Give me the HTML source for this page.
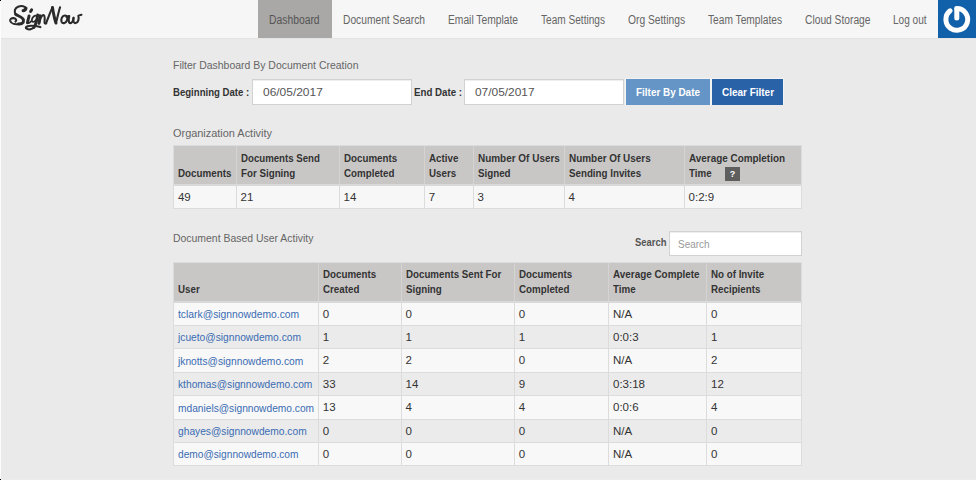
<!DOCTYPE html>
<html><head><meta charset="utf-8">
<style>
html,body{margin:0;padding:0}
body{width:976px;height:480px;overflow:hidden;position:relative;background:#eaeaea;font-family:"Liberation Sans",sans-serif}
.b{position:absolute}
.t{position:absolute;white-space:nowrap;transform-origin:0 0;font-family:"Liberation Sans",sans-serif}
</style></head><body>
<div class="b" style="left:0px;top:0px;width:976px;height:38px;background:#f6f6f6;"></div>
<div class="b" style="left:0px;top:38px;width:976px;height:1px;background:#e3e3e3;"></div>
<div class="b" style="left:258px;top:0px;width:74px;height:38px;background:#a9a8a6;"></div>
<div class="b" style="left:938px;top:0px;width:38px;height:38px;background:#1160aa;"></div>
<div class="b" style="left:0px;top:0px;width:1px;height:480px;background:#fdfdfd;"></div>
<div class="b" style="left:1px;top:479px;width:975px;height:1px;background:#ececec;"></div>
<div class="b" style="left:0px;top:479px;width:1px;height:1px;background:#000;"></div>
<div class="b" style="left:0px;top:0px;width:1px;height:1px;background:#000;"></div>
<div class="b" style="left:252px;top:79px;width:160px;height:26px;background:#fff;border:1px solid #d2d2d2;box-sizing:border-box;box-shadow:inset 0 1px 1px rgba(0,0,0,.075)"></div>
<div class="b" style="left:464px;top:79px;width:160px;height:26px;background:#fff;border:1px solid #d2d2d2;box-sizing:border-box;box-shadow:inset 0 1px 1px rgba(0,0,0,.075)"></div>
<div class="b" style="left:625px;top:78px;width:159px;height:27px;background:#f3f3f3;"></div>
<div class="b" style="left:626px;top:79px;width:84px;height:26px;background:#6595c6;"></div>
<div class="b" style="left:712px;top:79px;width:71px;height:26px;background:#2a62a8;"></div>
<div class="b" style="left:669px;top:231px;width:133px;height:25px;background:#fff;border:1px solid #d2d2d2;box-sizing:border-box;box-shadow:inset 0 1px 1px rgba(0,0,0,.075)"></div>
<div class="b" style="left:173px;top:145px;width:629px;height:64px;background:#dcdcdc;"></div>
<div class="b" style="left:174px;top:146px;width:627px;height:38px;background:#c9c7c6;"></div>
<div class="b" style="left:174px;top:184px;width:627px;height:2px;background:#d9d9d9;"></div>
<div class="b" style="left:174px;top:186px;width:627px;height:22px;background:#f7f7f7;"></div>
<div class="b" style="left:236px;top:146px;width:1px;height:38px;background:#d6d4d3;"></div>
<div class="b" style="left:236px;top:186px;width:1px;height:22px;background:#dcdcdc;"></div>
<div class="b" style="left:339px;top:146px;width:1px;height:38px;background:#d6d4d3;"></div>
<div class="b" style="left:339px;top:186px;width:1px;height:22px;background:#dcdcdc;"></div>
<div class="b" style="left:424px;top:146px;width:1px;height:38px;background:#d6d4d3;"></div>
<div class="b" style="left:424px;top:186px;width:1px;height:22px;background:#dcdcdc;"></div>
<div class="b" style="left:473px;top:146px;width:1px;height:38px;background:#d6d4d3;"></div>
<div class="b" style="left:473px;top:186px;width:1px;height:22px;background:#dcdcdc;"></div>
<div class="b" style="left:564px;top:146px;width:1px;height:38px;background:#d6d4d3;"></div>
<div class="b" style="left:564px;top:186px;width:1px;height:22px;background:#dcdcdc;"></div>
<div class="b" style="left:684px;top:146px;width:1px;height:38px;background:#d6d4d3;"></div>
<div class="b" style="left:684px;top:186px;width:1px;height:22px;background:#dcdcdc;"></div>
<div class="b" style="left:725px;top:167px;width:15px;height:14px;background:#5e5e5e;color:#fff;font-weight:700;font-size:9px;line-height:14px;text-align:center">?</div>
<div class="b" style="left:173px;top:262px;width:629px;height:204px;background:#dcdcdc;"></div>
<div class="b" style="left:174px;top:263px;width:627px;height:38px;background:#c9c7c6;"></div>
<div class="b" style="left:174px;top:301px;width:627px;height:2px;background:#d9d9d9;"></div>
<div class="b" style="left:174px;top:303px;width:627px;height:22px;background:#f8f8f8;"></div>
<div class="b" style="left:174px;top:326px;width:627px;height:22px;background:#ebebeb;"></div>
<div class="b" style="left:174px;top:349px;width:627px;height:23px;background:#f8f8f8;"></div>
<div class="b" style="left:174px;top:373px;width:627px;height:22px;background:#ebebeb;"></div>
<div class="b" style="left:174px;top:396px;width:627px;height:23px;background:#f8f8f8;"></div>
<div class="b" style="left:174px;top:420px;width:627px;height:22px;background:#ebebeb;"></div>
<div class="b" style="left:174px;top:443px;width:627px;height:22px;background:#f8f8f8;"></div>
<div class="b" style="left:318px;top:263px;width:1px;height:38px;background:#d6d4d3;"></div>
<div class="b" style="left:318px;top:303px;width:1px;height:162px;background:#dcdcdc;"></div>
<div class="b" style="left:401px;top:263px;width:1px;height:38px;background:#d6d4d3;"></div>
<div class="b" style="left:401px;top:303px;width:1px;height:162px;background:#dcdcdc;"></div>
<div class="b" style="left:514px;top:263px;width:1px;height:38px;background:#d6d4d3;"></div>
<div class="b" style="left:514px;top:303px;width:1px;height:162px;background:#dcdcdc;"></div>
<div class="b" style="left:608px;top:263px;width:1px;height:38px;background:#d6d4d3;"></div>
<div class="b" style="left:608px;top:303px;width:1px;height:162px;background:#dcdcdc;"></div>
<div class="b" style="left:706px;top:263px;width:1px;height:38px;background:#d6d4d3;"></div>
<div class="b" style="left:706px;top:303px;width:1px;height:162px;background:#dcdcdc;"></div>
<svg class="b" style="left:938px;top:0" width="38" height="38" viewBox="0 0 38 38">
  <path d="M12.1 10.8 A 10.9 10.9 0 1 0 18.8 8.5" fill="none" stroke="#fff" stroke-width="5" stroke-linecap="round"/>
  <line x1="18.8" y1="9" x2="18.8" y2="17.9" stroke="#fff" stroke-width="5" stroke-linecap="round"/>
</svg>
<svg class="b" style="left:5px;top:2px" width="85" height="34" viewBox="0 0 976 390">
 <g fill="none" stroke="#2a2a2a" stroke-linecap="round" stroke-linejoin="round">
  <g stroke-width="24">
   <path d="M207,100 C225,105 250,90 241,70 C232,48 190,38 150,55 C115,70 100,105 122,140"/>
   <path d="M155,253 C120,258 70,250 60,218 C55,195 75,182 100,185 C125,190 140,210 120,224"/>
   <path d="M390,245 C402,200 418,150 440,150 C464,152 454,210 454,232 C454,250 464,250 474,242"/>
   <path d="M470,245 C495,185 520,115 545,62"/>
   <path d="M585,242 C600,185 615,115 632,60"/>
   <path d="M690,155 C655,152 640,200 650,228 C660,250 695,248 710,215 C725,180 710,155 690,155"/>
   <path d="M706,170 C716,168 724,164 730,162"/>
   <path d="M738,160 C728,200 728,242 752,242 C772,242 782,212 787,182"/>
   <path d="M787,182 C782,217 787,247 812,242 C842,237 852,192 842,158 C852,152 864,150 878,146"/>
   <path d="M332,292 C310,318 262,322 242,302 C230,285 262,272 302,272 C342,272 380,280 406,288"/>
  </g>
  <g stroke-width="20">
   <path d="M368,160 C340,150 312,172 308,205 C305,232 332,236 352,210"/>
   <path d="M258,238 C262,250 285,240 300,220"/>
  </g>
  <g stroke-width="34">
   <path d="M122,140 C142,162 207,168 212,207 C216,245 188,255 155,253"/>
   <path d="M241,70 C238,85 225,95 207,100"/>
   <path d="M306,88 L294,108"/>
   <path d="M276,160 C270,190 262,215 258,238"/>
   <path d="M375,150 C368,200 352,262 332,292"/>
   <path d="M402,158 C400,190 394,222 390,245"/>
   <path d="M545,62 C556,130 570,195 585,242"/>
  </g>
 </g>
</svg>

<span class="t" style="left:269.4px;top:13.54px;font-size:12px;line-height:12px;font-weight:400;color:#555;transform:scaleX(0.862)">Dashboard</span>
<span class="t" style="left:343.0px;top:13.54px;font-size:12px;line-height:12px;font-weight:400;color:#656565;transform:scaleX(0.854)">Document Search</span>
<span class="t" style="left:448.0px;top:13.54px;font-size:12px;line-height:12px;font-weight:400;color:#656565;transform:scaleX(0.855)">Email Template</span>
<span class="t" style="left:541.0px;top:13.54px;font-size:12px;line-height:12px;font-weight:400;color:#656565;transform:scaleX(0.842)">Team Settings</span>
<span class="t" style="left:628.0px;top:13.54px;font-size:12px;line-height:12px;font-weight:400;color:#656565;transform:scaleX(0.855)">Org Settings</span>
<span class="t" style="left:708.0px;top:13.54px;font-size:12px;line-height:12px;font-weight:400;color:#656565;transform:scaleX(0.849)">Team Templates</span>
<span class="t" style="left:804.5px;top:13.54px;font-size:12px;line-height:12px;font-weight:400;color:#656565;transform:scaleX(0.854)">Cloud Storage</span>
<span class="t" style="left:893.0px;top:13.54px;font-size:12px;line-height:12px;font-weight:400;color:#656565;transform:scaleX(0.837)">Log out</span>
<span class="t" style="left:173.2px;top:59.89px;font-size:11px;line-height:11px;font-weight:400;color:#666;transform:scaleX(0.951)">Filter Dashboard By Document Creation</span>
<span class="t" style="left:173.2px;top:86.51px;font-size:10.5px;line-height:10.5px;font-weight:700;color:#333;transform:scaleX(0.913)">Beginning Date :</span>
<span class="t" style="left:414.2px;top:86.51px;font-size:10.5px;line-height:10.5px;font-weight:700;color:#333;transform:scaleX(0.924)">End Date :</span>
<span class="t" style="left:262.8px;top:86.67px;font-size:11.5px;line-height:11.5px;font-weight:400;color:#555;transform:scaleX(1.039)">06/05/2017</span>
<span class="t" style="left:475.0px;top:86.67px;font-size:11.5px;line-height:11.5px;font-weight:400;color:#555;transform:scaleX(1.034)">07/05/2017</span>
<span class="t" style="left:636.0px;top:86.96px;font-size:10.8px;line-height:10.8px;font-weight:700;color:#fff;transform:scaleX(0.919)">Filter By Date</span>
<span class="t" style="left:721.5px;top:86.96px;font-size:10.8px;line-height:10.8px;font-weight:700;color:#fff;transform:scaleX(0.922)">Clear Filter</span>
<span class="t" style="left:173.0px;top:128.09px;font-size:11px;line-height:11px;font-weight:400;color:#666;transform:scaleX(0.993)">Organization Activity</span>
<span class="t" style="left:177.9px;top:167.86px;font-size:10.5px;line-height:10.5px;font-weight:700;color:#333;transform:scaleX(0.934)">Documents</span>
<span class="t" style="left:240.6px;top:152.86px;font-size:10.5px;line-height:10.5px;font-weight:700;color:#333;transform:scaleX(0.920)">Documents Send</span>
<span class="t" style="left:240.6px;top:167.86px;font-size:10.5px;line-height:10.5px;font-weight:700;color:#333;transform:scaleX(0.930)">For Signing</span>
<span class="t" style="left:343.5px;top:152.86px;font-size:10.5px;line-height:10.5px;font-weight:700;color:#333;transform:scaleX(0.930)">Documents</span>
<span class="t" style="left:343.5px;top:167.86px;font-size:10.5px;line-height:10.5px;font-weight:700;color:#333;transform:scaleX(0.930)">Completed</span>
<span class="t" style="left:428.8px;top:152.86px;font-size:10.5px;line-height:10.5px;font-weight:700;color:#333;transform:scaleX(0.930)">Active</span>
<span class="t" style="left:428.8px;top:167.86px;font-size:10.5px;line-height:10.5px;font-weight:700;color:#333;transform:scaleX(0.930)">Users</span>
<span class="t" style="left:477.5px;top:152.86px;font-size:10.5px;line-height:10.5px;font-weight:700;color:#333;transform:scaleX(0.948)">Number Of Users</span>
<span class="t" style="left:477.5px;top:167.86px;font-size:10.5px;line-height:10.5px;font-weight:700;color:#333;transform:scaleX(0.930)">Signed</span>
<span class="t" style="left:568.5px;top:152.86px;font-size:10.5px;line-height:10.5px;font-weight:700;color:#333;transform:scaleX(0.946)">Number Of Users</span>
<span class="t" style="left:568.5px;top:167.86px;font-size:10.5px;line-height:10.5px;font-weight:700;color:#333;transform:scaleX(0.930)">Sending Invites</span>
<span class="t" style="left:688.6px;top:152.86px;font-size:10.5px;line-height:10.5px;font-weight:700;color:#333;transform:scaleX(0.944)">Average Completion</span>
<span class="t" style="left:688.6px;top:167.86px;font-size:10.5px;line-height:10.5px;font-weight:700;color:#333;transform:scaleX(0.930)">Time</span>
<span class="t" style="left:177.9px;top:191.87px;font-size:11.5px;line-height:11.5px;font-weight:400;color:#333;transform:scaleX(1.000)">49</span>
<span class="t" style="left:240.6px;top:191.87px;font-size:11.5px;line-height:11.5px;font-weight:400;color:#333;transform:scaleX(1.000)">21</span>
<span class="t" style="left:343.5px;top:191.87px;font-size:11.5px;line-height:11.5px;font-weight:400;color:#333;transform:scaleX(1.000)">14</span>
<span class="t" style="left:428.8px;top:191.87px;font-size:11.5px;line-height:11.5px;font-weight:400;color:#333;transform:scaleX(1.000)">7</span>
<span class="t" style="left:477.5px;top:191.87px;font-size:11.5px;line-height:11.5px;font-weight:400;color:#333;transform:scaleX(1.000)">3</span>
<span class="t" style="left:568.5px;top:191.87px;font-size:11.5px;line-height:11.5px;font-weight:400;color:#333;transform:scaleX(1.000)">4</span>
<span class="t" style="left:688.6px;top:191.87px;font-size:11.5px;line-height:11.5px;font-weight:400;color:#333;transform:scaleX(1.000)">0:2:9</span>
<span class="t" style="left:173.3px;top:232.69px;font-size:11px;line-height:11px;font-weight:400;color:#666;transform:scaleX(0.949)">Document Based User Activity</span>
<span class="t" style="left:634.8px;top:237.11px;font-size:10.5px;line-height:10.5px;font-weight:700;color:#555;transform:scaleX(0.899)">Search</span>
<span class="t" style="left:678.3px;top:239.19px;font-size:11px;line-height:11px;font-weight:400;color:#999;transform:scaleX(0.904)">Search</span>
<span class="t" style="left:177.7px;top:284.01px;font-size:10.5px;line-height:10.5px;font-weight:700;color:#333;transform:scaleX(0.930)">User</span>
<span class="t" style="left:322.8px;top:268.91px;font-size:10.5px;line-height:10.5px;font-weight:700;color:#333;transform:scaleX(0.930)">Documents</span>
<span class="t" style="left:322.8px;top:284.01px;font-size:10.5px;line-height:10.5px;font-weight:700;color:#333;transform:scaleX(0.930)">Created</span>
<span class="t" style="left:405.5px;top:268.91px;font-size:10.5px;line-height:10.5px;font-weight:700;color:#333;transform:scaleX(0.928)">Documents Sent For</span>
<span class="t" style="left:405.5px;top:284.01px;font-size:10.5px;line-height:10.5px;font-weight:700;color:#333;transform:scaleX(0.930)">Signing</span>
<span class="t" style="left:518.8px;top:268.91px;font-size:10.5px;line-height:10.5px;font-weight:700;color:#333;transform:scaleX(0.930)">Documents</span>
<span class="t" style="left:518.8px;top:284.01px;font-size:10.5px;line-height:10.5px;font-weight:700;color:#333;transform:scaleX(0.930)">Completed</span>
<span class="t" style="left:613.0px;top:268.91px;font-size:10.5px;line-height:10.5px;font-weight:700;color:#333;transform:scaleX(0.943)">Average Complete</span>
<span class="t" style="left:613.0px;top:284.01px;font-size:10.5px;line-height:10.5px;font-weight:700;color:#333;transform:scaleX(0.930)">Time</span>
<span class="t" style="left:711.1px;top:268.91px;font-size:10.5px;line-height:10.5px;font-weight:700;color:#333;transform:scaleX(0.930)">No of Invite</span>
<span class="t" style="left:711.1px;top:284.01px;font-size:10.5px;line-height:10.5px;font-weight:700;color:#333;transform:scaleX(0.930)">Recipients</span>
<span class="t" style="left:177.7px;top:308.99px;font-size:11px;line-height:11px;font-weight:400;color:#3a6cb3;transform:scaleX(0.938)">tclark@signnowdemo.com</span>
<span class="t" style="left:322.8px;top:308.57px;font-size:11.5px;line-height:11.5px;font-weight:400;color:#333;transform:scaleX(1.000)">0</span>
<span class="t" style="left:405.5px;top:308.57px;font-size:11.5px;line-height:11.5px;font-weight:400;color:#333;transform:scaleX(1.000)">0</span>
<span class="t" style="left:518.8px;top:308.57px;font-size:11.5px;line-height:11.5px;font-weight:400;color:#333;transform:scaleX(1.000)">0</span>
<span class="t" style="left:613.0px;top:308.57px;font-size:11.5px;line-height:11.5px;font-weight:400;color:#333;transform:scaleX(1.000)">N/A</span>
<span class="t" style="left:711.1px;top:308.57px;font-size:11.5px;line-height:11.5px;font-weight:400;color:#333;transform:scaleX(1.000)">0</span>
<span class="t" style="left:177.7px;top:332.39px;font-size:11px;line-height:11px;font-weight:400;color:#3a6cb3;transform:scaleX(0.930)">jcueto@signnowdemo.com</span>
<span class="t" style="left:322.8px;top:331.97px;font-size:11.5px;line-height:11.5px;font-weight:400;color:#333;transform:scaleX(1.000)">1</span>
<span class="t" style="left:405.5px;top:331.97px;font-size:11.5px;line-height:11.5px;font-weight:400;color:#333;transform:scaleX(1.000)">1</span>
<span class="t" style="left:518.8px;top:331.97px;font-size:11.5px;line-height:11.5px;font-weight:400;color:#333;transform:scaleX(1.000)">1</span>
<span class="t" style="left:613.0px;top:331.97px;font-size:11.5px;line-height:11.5px;font-weight:400;color:#333;transform:scaleX(1.000)">0:0:3</span>
<span class="t" style="left:711.1px;top:331.97px;font-size:11.5px;line-height:11.5px;font-weight:400;color:#333;transform:scaleX(1.000)">1</span>
<span class="t" style="left:177.7px;top:355.79px;font-size:11px;line-height:11px;font-weight:400;color:#3a6cb3;transform:scaleX(0.930)">jknotts@signnowdemo.com</span>
<span class="t" style="left:322.8px;top:355.37px;font-size:11.5px;line-height:11.5px;font-weight:400;color:#333;transform:scaleX(1.000)">2</span>
<span class="t" style="left:405.5px;top:355.37px;font-size:11.5px;line-height:11.5px;font-weight:400;color:#333;transform:scaleX(1.000)">2</span>
<span class="t" style="left:518.8px;top:355.37px;font-size:11.5px;line-height:11.5px;font-weight:400;color:#333;transform:scaleX(1.000)">0</span>
<span class="t" style="left:613.0px;top:355.37px;font-size:11.5px;line-height:11.5px;font-weight:400;color:#333;transform:scaleX(1.000)">N/A</span>
<span class="t" style="left:711.1px;top:355.37px;font-size:11.5px;line-height:11.5px;font-weight:400;color:#333;transform:scaleX(1.000)">2</span>
<span class="t" style="left:177.7px;top:379.19px;font-size:11px;line-height:11px;font-weight:400;color:#3a6cb3;transform:scaleX(0.930)">kthomas@signnowdemo.com</span>
<span class="t" style="left:322.8px;top:378.77px;font-size:11.5px;line-height:11.5px;font-weight:400;color:#333;transform:scaleX(1.000)">33</span>
<span class="t" style="left:405.5px;top:378.77px;font-size:11.5px;line-height:11.5px;font-weight:400;color:#333;transform:scaleX(1.000)">14</span>
<span class="t" style="left:518.8px;top:378.77px;font-size:11.5px;line-height:11.5px;font-weight:400;color:#333;transform:scaleX(1.000)">9</span>
<span class="t" style="left:613.0px;top:378.77px;font-size:11.5px;line-height:11.5px;font-weight:400;color:#333;transform:scaleX(1.000)">0:3:18</span>
<span class="t" style="left:711.1px;top:378.77px;font-size:11.5px;line-height:11.5px;font-weight:400;color:#333;transform:scaleX(1.000)">12</span>
<span class="t" style="left:177.7px;top:402.59px;font-size:11px;line-height:11px;font-weight:400;color:#3a6cb3;transform:scaleX(0.926)">mdaniels@signnowdemo.com</span>
<span class="t" style="left:322.8px;top:402.17px;font-size:11.5px;line-height:11.5px;font-weight:400;color:#333;transform:scaleX(1.000)">13</span>
<span class="t" style="left:405.5px;top:402.17px;font-size:11.5px;line-height:11.5px;font-weight:400;color:#333;transform:scaleX(1.000)">4</span>
<span class="t" style="left:518.8px;top:402.17px;font-size:11.5px;line-height:11.5px;font-weight:400;color:#333;transform:scaleX(1.000)">4</span>
<span class="t" style="left:613.0px;top:402.17px;font-size:11.5px;line-height:11.5px;font-weight:400;color:#333;transform:scaleX(1.000)">0:0:6</span>
<span class="t" style="left:711.1px;top:402.17px;font-size:11.5px;line-height:11.5px;font-weight:400;color:#333;transform:scaleX(1.000)">4</span>
<span class="t" style="left:177.7px;top:425.99px;font-size:11px;line-height:11px;font-weight:400;color:#3a6cb3;transform:scaleX(0.930)">ghayes@signnowdemo.com</span>
<span class="t" style="left:322.8px;top:425.57px;font-size:11.5px;line-height:11.5px;font-weight:400;color:#333;transform:scaleX(1.000)">0</span>
<span class="t" style="left:405.5px;top:425.57px;font-size:11.5px;line-height:11.5px;font-weight:400;color:#333;transform:scaleX(1.000)">0</span>
<span class="t" style="left:518.8px;top:425.57px;font-size:11.5px;line-height:11.5px;font-weight:400;color:#333;transform:scaleX(1.000)">0</span>
<span class="t" style="left:613.0px;top:425.57px;font-size:11.5px;line-height:11.5px;font-weight:400;color:#333;transform:scaleX(1.000)">N/A</span>
<span class="t" style="left:711.1px;top:425.57px;font-size:11.5px;line-height:11.5px;font-weight:400;color:#333;transform:scaleX(1.000)">0</span>
<span class="t" style="left:177.7px;top:449.39px;font-size:11px;line-height:11px;font-weight:400;color:#3a6cb3;transform:scaleX(0.924)">demo@signnowdemo.com</span>
<span class="t" style="left:322.8px;top:448.97px;font-size:11.5px;line-height:11.5px;font-weight:400;color:#333;transform:scaleX(1.000)">0</span>
<span class="t" style="left:405.5px;top:448.97px;font-size:11.5px;line-height:11.5px;font-weight:400;color:#333;transform:scaleX(1.000)">0</span>
<span class="t" style="left:518.8px;top:448.97px;font-size:11.5px;line-height:11.5px;font-weight:400;color:#333;transform:scaleX(1.000)">0</span>
<span class="t" style="left:613.0px;top:448.97px;font-size:11.5px;line-height:11.5px;font-weight:400;color:#333;transform:scaleX(1.000)">N/A</span>
<span class="t" style="left:711.1px;top:448.97px;font-size:11.5px;line-height:11.5px;font-weight:400;color:#333;transform:scaleX(1.000)">0</span>
</body></html>
